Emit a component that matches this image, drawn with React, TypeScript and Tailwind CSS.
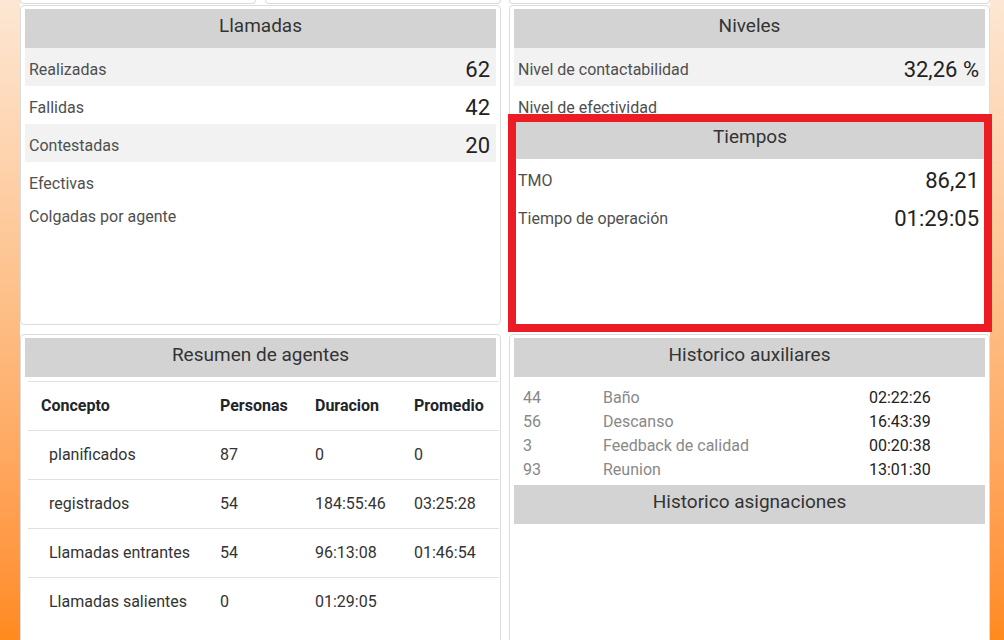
import type { ReactNode } from "react";

type Row = { label: string; value?: string; shade?: boolean; h?: string };

const llamadas: Row[] = [
  { label: "Realizadas", value: "62", shade: true },
  { label: "Fallidas", value: "42" },
  { label: "Contestadas", value: "20", shade: true },
  { label: "Efectivas" },
  { label: "Colgadas por agente", h: "h-[34px] pt-0" },
];

const tiempos: Row[] = [
  { label: "TMO", value: "86,21" },
  { label: "Tiempo de operación", value: "01:29:05" },
];

const agentes = [
  { concepto: "planificados", personas: "87", duracion: "0", promedio: "0" },
  { concepto: "registrados", personas: "54", duracion: "184:55:46", promedio: "03:25:28" },
  { concepto: "Llamadas entrantes", personas: "54", duracion: "96:13:08", promedio: "01:46:54" },
  { concepto: "Llamadas salientes", personas: "0", duracion: "01:29:05", promedio: "" },
];

const auxiliares = [
  { n: "44", name: "Baño", time: "02:22:26" },
  { n: "56", name: "Descanso", time: "16:43:39" },
  { n: "3", name: "Feedback de calidad", time: "00:20:38" },
  { n: "93", name: "Reunion", time: "13:01:30" },
];

function Header({ children, className = "h-[39px] pb-[5px]" }: { children: ReactNode; className?: string }) {
  return (
    <div
      className={`flex items-center justify-center bg-[#d3d3d3] text-[19px] text-[#333] ${className}`}
    >
      {children}
    </div>
  );
}

function StatRow({ row, pad = "pl-[4px] pr-[6px]" }: { row: Row; pad?: string }) {
  return (
    <div
      className={`flex items-center justify-between ${pad} ${
        row.h ?? "h-[38px] pt-[5px]"
      } ${row.shade ? "bg-[#f2f2f2]" : ""}`}
    >
      <span className="text-[16px] leading-6 text-[#4f4f4f]">{row.label}</span>
      {row.value && (
        <span className="text-[22px] leading-7 text-[#222]">{row.value}</span>
      )}
    </div>
  );
}

function Card({ children, className = "" }: { children: ReactNode; className?: string }) {
  return (
    <div
      className={`rounded-[4px] border border-[#dcdcdc] bg-white px-[4px] pt-[3px] ${className}`}
    >
      {children}
    </div>
  );
}

export default function App() {
  return (
    <div
      className="h-[640px] w-full overflow-hidden bg-gradient-to-b from-[#fde7d4] via-[#fdbd83] to-[#ff8a1c]"
      style={{ fontFamily: "Roboto, 'Liberation Sans', sans-serif" }}
    >
      <div className="ml-[20px] h-full w-[970px] bg-white">
        {/* tail of the cards above */}
        <div className="grid h-[4px] grid-cols-2 gap-x-[8px]">
          <div className="grid grid-cols-2 gap-x-[9px]">
            <div className="rounded-b-[4px] border-x border-b border-[#dcdcdc]" />
            <div className="rounded-b-[4px] border-x border-b border-[#dcdcdc]" />
          </div>
          <div className="rounded-b-[4px] border-x border-b border-[#dcdcdc]" />
        </div>

        <div className="mt-[1px] grid grid-cols-2 gap-x-[8px] gap-y-[9px]">
          <Card className="h-[320px]">
            <Header>Llamadas</Header>
            {llamadas.map((r) => (
              <StatRow key={r.label} row={r} />
            ))}
          </Card>

          <Card className="relative h-[320px]">
            <Header>Niveles</Header>
            <StatRow row={{ label: "Nivel de contactabilidad", value: "32,26 %", shade: true }} />
            <StatRow row={{ label: "Nivel de efectividad" }} />

            <div className="absolute left-[-2px] right-[-3px] top-[108px] h-[218px] border-[8px] border-[#ec1c24] bg-white">
              <Header className="h-[37px] pb-[6px]">Tiempos</Header>
              {tiempos.map((r) => (
                <StatRow key={r.label} row={r} pad="pl-[2px] pr-[5px]" />
              ))}
            </div>
          </Card>

          <Card className="h-[320px]">
            <Header>Resumen de agentes</Header>
            <table className="ml-[3px] mt-[4px] w-[471px] table-fixed border-collapse text-[16px] leading-6">
              <colgroup>
                <col className="w-[180px]" />
                <col className="w-[95px]" />
                <col className="w-[99px]" />
                <col />
              </colgroup>
              <thead>
                <tr className="h-[49px] border-t border-[#dee2e6] text-left font-bold text-[#212529]">
                  <th className="pl-[13px]">Concepto</th>
                  <th className="pl-[12px]">Personas</th>
                  <th className="pl-[12px]">Duracion</th>
                  <th className="pl-[12px]">Promedio</th>
                </tr>
              </thead>
              <tbody className="text-[#333]">
                {agentes.map((a) => (
                  <tr key={a.concepto} className="h-[49px] border-t border-[#dee2e6]">
                    <td className="pl-[21px]">{a.concepto}</td>
                    <td className="pl-[12px]">{a.personas}</td>
                    <td className="pl-[12px]">{a.duracion}</td>
                    <td className="pl-[12px]">{a.promedio}</td>
                  </tr>
                ))}
              </tbody>
            </table>
          </Card>

          <Card className="h-[320px]">
            <Header>Historico auxiliares</Header>
            <div className="pl-[9px] pt-[9px] text-[16px] leading-6">
              {auxiliares.map((a) => (
                <div key={a.n} className="grid grid-cols-[80px_266px_1fr]">
                  <span className="text-[#888]">{a.n}</span>
                  <span className="text-[#888]">{a.name}</span>
                  <span className="text-[#222]">{a.time}</span>
                </div>
              ))}
            </div>
            <Header className="mt-[3px] h-[39px] pb-[5px]">Historico asignaciones</Header>
          </Card>
        </div>
      </div>
    </div>
  );
}
